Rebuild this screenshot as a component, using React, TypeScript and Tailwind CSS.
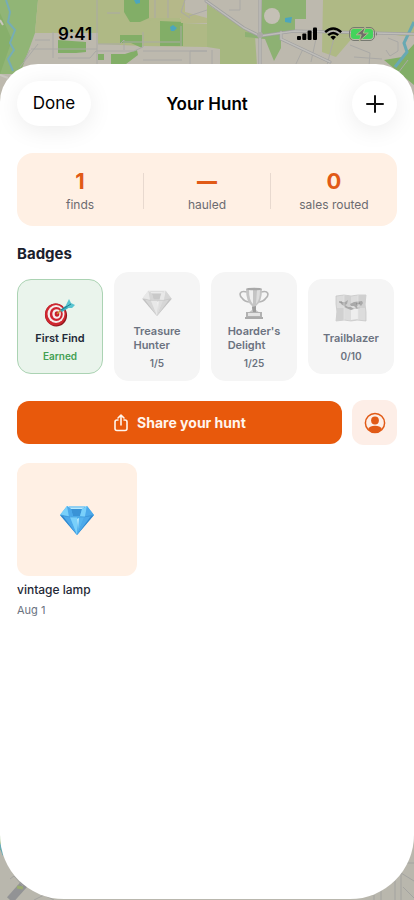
import type { ReactNode } from "react";

function MapTop() {
  return (
    <svg className="absolute inset-x-0 top-0 h-[130px] w-full" viewBox="0 0 414 130" preserveAspectRatio="none" aria-hidden="true">
      <rect width="414" height="130" fill="#bdb9ae" />
      <path d="M0 0H38L35 33 20 74H0Z" fill="#91b576" />
      <path d="M38 0H149V18L207 22V47L143 46 98 44V33H35Z" fill="#afb985" />
      <path d="M0 13L12 40 0 74Z" fill="#87af6b" />
      <path d="M124 0H149V18L140 22H130L124 12ZM160 21H183V46H160ZM58 40L86 42V52L76 53H58ZM120 35H142V48L131 43H120ZM111 54H125L137 50 138 55 126 64H111ZM98 54H104V60H98ZM58 64H80V66H58Z" fill="#82ae67" />
      <path d="M149 18H207V23L160 21V23L149 20Z" fill="#afb985" />
      <path d="M149 0H207V24L183 23 180 18H149Z" fill="#bdb9ae" />
      <path d="M149 0V18H181V23H207V18L185 12V0Z" fill="#b5b889" />
      <path d="M207 4L255 36 257 66 220 64V49L207 47Z" fill="#a6b780" />
      <path d="M262 0H306V19H295V30L281 32V48L274 61 265 39 245 37V32L261 34Z" fill="#8db173" />
      <path d="M323 0H414V38L360 29 336 57 322 52Z" fill="#afb985" />
      <path d="M337 37L414 36V74L394 67 383 60 404 54 414 39Z" fill="#bdb9ae" />
      <path d="M384 60L402 57 414 44V85Z" fill="#82ae67" />
      <path d="M6 0L10 12 8 22 15 30 10 43 14 50 8 59 13 71" stroke="#76adb6" strokeWidth="2" fill="none" />
      <path d="M414 22L404 43 407 52 395 67" stroke="#68a9b3" strokeWidth="3" fill="none" />
      <path d="M134 0H140V3L136 4ZM170 27L173 25 177 28 174 31H171ZM285 18L292 17 291 23 285 22Z" fill="#4ca6bd" />
      <circle cx="272" cy="16" r="8" fill="#c4c0b5" />
      <g stroke="#aaa9a6" fill="none">
        <path d="M97 0V66M53 32V58M35 40H50M31 49H97M24 61L30 50M20 67L38 44M58 58H90L96 51H134L143 47V32M98 44H120L124 40V50M125 42H180M181 26V46M107 13H120M143 51H207M143 60H182M190 66V51H207" />
        <path d="M155 0V18M168 0V18M185 0L181 12 190 18M207 10L189 16M229 10L240 10 240 0M212 66V50M303 49L295 66M317 34L311 62M327 65L334 38M350 45L370 53 369 66M388 38L398 42V51L390 56 386 50M354 57L382 59M408 60L395 77" />
      </g>
      <g fill="none" strokeLinecap="round">
        <path d="M206 1L244 28 260 36 295 31 414 34M260 36V66M281 32V39L330 62M260 35V0" stroke="#a0a0a1" strokeWidth="3" />
        <path d="M206 1L244 28 260 36 295 31 414 34M260 36V66M281 32V39L330 62M260 35V0" stroke="#bebdb9" strokeWidth="1.5" />
      </g>
      <circle cx="260" cy="35" r="3" fill="#aaa9a6" />
      <path d="M0 20L3 25M0 75L8 78" stroke="#c9c6bf" strokeWidth="2" />
    </svg>
  );
}

function MapBottom() {
  return (
    <svg className="absolute inset-x-0 bottom-0 h-[110px] w-full" viewBox="0 0 414 110" preserveAspectRatio="none" aria-hidden="true">
      <rect width="414" height="110" fill="#b9b7ad" />
      <path d="M0 0H3V60H0Z" fill="#87af6b" />
      <path d="M0 54L4 65" stroke="#68a9b3" strokeWidth="3" />
      <path d="M10 110L34 83" stroke="#929395" strokeWidth="8" />
      <path d="M17 97L23 98" stroke="#9aac70" strokeWidth="3" />
      <path d="M10 89L14 86 23 96M34 110L44 105 54 110M381 110V96M401 110V73H414M395 84V110M401 83L414 91M403 97L414 108M374 105V110" fill="none" stroke="#a3a3a0" />
    </svg>
  );
}

function StatusIcons() {
  return (
    <svg className="h-4 w-[82px]" viewBox="0 0 82 16" aria-hidden="true">
      <rect x="1" y="10" width="4" height="4" rx="1" />
      <rect x="6.3" y="7.5" width="4" height="6.5" rx="1" />
      <rect x="11.6" y="4.5" width="4" height="9.5" rx="1" />
      <rect x="17" y="1.5" width="4" height="12.5" rx="1" />
      <g fill="none" stroke="#000" strokeWidth="2.4">
        <path d="M29.2 6.2Q37.2 -1.2 45.2 6.2M32.2 9.2Q37.2 4.8 42.2 9.2" />
      </g>
      <path d="M34.4 11Q37.2 8.6 40 11L37.2 14Z" />
      <rect x="53.5" y="1.5" width="25" height="13" rx="4.5" fill="none" stroke="#777971" />
      <rect x="55" y="3" width="22" height="10" rx="3" fill="#43d35c" />
      <path d="M80 6Q82 8 80 10Z" fill="#777971" />
      <path d="M69.5 .8L60.3 8.8H65.2L63.2 15.2L72.3 7.1H67.4Z" fill="#706e69" stroke="#b2ba91" />
    </svg>
  );
}

function Gem({ gray = false, className }: { gray?: boolean; className: string }) {
  const c = gray
    ? ["#dedede", "#f0f0f0", "#c9c9c9", "#d6d6d6", "#e8e8e8", "#c2c2c2"]
    : ["#55b4ef", "#b8eafe", "#3a93d6", "#4ca9ea", "#79d0fa", "#2f86cd"];
  return (
    <svg className={className} viewBox="0 0 34 30" aria-hidden="true">
      <path d="M7 1H27L34 10 17 30 0 10Z" fill={c[0]} />
      <path d="M7 1L0 10 11 12Z" fill={c[4]} />
      <path d="M7 1H27L22 4H11Z" fill={c[1]} />
      <path d="M11 4H22L20 11H13Z" fill={c[2]} />
      <path d="M7 1L11 4 13 11 9 12Z" fill={c[3]} />
      <path d="M22 4L27 1 25 12 20 11Z" fill={c[4]} />
      <path d="M27 1L34 10 25 12Z" fill={c[3]} />
      <path d="M0 10L9 12 17 30Z" fill={c[5]} />
      <path d="M3 11L10 12 17 30Z" fill={c[3]} />
      <path d="M10 12H17V30Z" fill={c[4]} />
      <path d="M17 12H25L17 30Z" fill={c[0]} />
      <path d="M25 12L34 10 17 30Z" fill={c[5]} />
      <path d="M24 12L31 11 17 30Z" fill={c[3]} />
      <path d="M17 14L19 13 18 24Z" fill={c[1]} />
      <path d="M1 10L10 12H24L33 10M9 2H25" fill="none" stroke={gray ? c[5] : c[2]} strokeWidth=".6" />
    </svg>
  );
}

function Target() {
  return (
    <svg className="h-7 w-8" viewBox="0 0 32 28" aria-hidden="true">
      <ellipse cx="12" cy="16" rx="11" ry="11.5" transform="rotate(-20 12 16)" fill="#8d171d" />
      <ellipse cx="11.5" cy="15.5" rx="10.5" ry="11" fill="#cf2730" />
      <ellipse cx="12" cy="15" rx="8.5" ry="9" fill="#f5eeee" />
      <ellipse cx="12.3" cy="15" rx="6.5" ry="7" fill="#cd2430" />
      <ellipse cx="12.6" cy="15" rx="4.3" ry="4.8" fill="#f6efef" />
      <ellipse cx="13" cy="15" rx="2.3" ry="2.7" fill="#c91e2b" />
      <path d="M13 15L17 11" stroke="#c99335" strokeWidth="1.5" />
      <path d="M16 11L24 5 26 8 18 13Z" fill="#3baebd" />
      <path d="M22 6L25 0 27 4 31 6 28 9 24 9Z" fill="#58c4d0" />
      <path d="M17 11L27 5" stroke="#1e7c91" strokeWidth="1" />
    </svg>
  );
}

function Trophy() {
  return (
    <svg className="h-8 w-[30px]" viewBox="0 0 30 32" aria-hidden="true">
      <path d="M8 5C0 3 0 8 3 11 5 14 8 15 11 15M22 5C30 3 30 8 27 11 25 14 22 15 19 15" fill="none" stroke="#b4b4b4" strokeWidth="1.6" />
      <path d="M7 2H23Q23 15 17 19V23L21 26H9L13 23V19Q7 15 7 2Z" fill="#c4c4c4" />
      <path d="M10 3H14V17Q10 13 10 3Z" fill="#efefef" />
      <path d="M18 3H21Q21 13 17 17Z" fill="#dddddd" />
      <ellipse cx="15" cy="2" rx="8" ry="1.3" fill="#a8a8a8" />
      <path d="M13 20L17 19V25H14Z" fill="#9d9d9d" />
      <path d="M7 25H23V30H7Z" fill="#b2b2b2" />
      <path d="M9 26H21V29H9Z" fill="#e4e4e4" />
      <path d="M6 30H24V32H6Z" fill="#ababab" />
    </svg>
  );
}

function WorldMap() {
  return (
    <svg className="h-7 w-8" viewBox="0 0 32 28" aria-hidden="true">
      <path d="M1 2L9 1 16 2 23 1 31 1 30 10 31 18 31 27 22 26 16 27 9 26 1 27 2 18 1 10Z" fill="#dcdcdc" stroke="#c3c3c3" strokeWidth=".7" />
      <path d="M9 1L16 2V14H9ZM23 1H31L30 14H23ZM2 14H9V26L1 27ZM16 14H23V26L16 27Z" fill="#d0d0d0" />
      <path d="M16 15H23V25L16 26Z" fill="#eee" />
      <path d="M5 8L10 8 13 6 12 10 10 11 13 13 16 13 19 15 16 16 11 14 9 12 6 10ZM15 10L19 8 27 7 28 9 26 12 24 10 22 13 25 14 22 15 19 12 16 12Z" fill="#a9a9a9" />
      <path d="M4 8H7M21 10L25 9" stroke="#8b8b8b" />
      <path d="M9 1V26M23 1V26" stroke="#e8e8e8" strokeWidth=".6" />
    </svg>
  );
}

function Stat({ value, label }: { value: ReactNode; label: string }) {
  return (
    <div className="flex flex-1 flex-col items-center">
      <dd className="flex h-7 items-center text-[22px] leading-7 font-bold text-[#e15a16]">{value}</dd>
      <dt className="order-1 text-xs leading-5 text-[#6b6b70]">{label}</dt>
    </div>
  );
}

function Badge({ icon, lines, status, earned = false }: { icon: ReactNode; lines: string[]; status: string; earned?: boolean }) {
  return (
    <li
      className={
        earned
          ? "flex w-[86px] shrink-0 flex-col items-center rounded-[14px] border border-[#abd3b3] bg-[#eaf4ec] pt-[15px] pb-[10px]"
          : "flex w-[86px] shrink-0 flex-col items-center rounded-[14px] border border-[#f5f5f5] bg-[#f5f5f5] pt-[11px] pb-[10px]"
      }
    >
      <div className={earned ? "flex h-9 items-center" : "flex h-10 items-start pt-[3px]"}>{icon}</div>
      <h3 className={earned ? "text-[11px] leading-[14px] font-semibold text-[#1f2937]" : "text-[11px] leading-[14px] font-semibold text-[#6b7280]"}>
        {lines.map((line) => (
          <span key={line} className="block whitespace-nowrap">{line}</span>
        ))}
      </h3>
      <p className={earned ? "mt-1 text-[10px] leading-[14px] font-semibold text-[#43a052]" : "mt-1 text-[10px] leading-[14px] font-semibold text-[#6b7280]"}>{status}</p>
    </li>
  );
}

export default function App() {
  return (
    <div className="relative isolate flex min-h-screen flex-col overflow-hidden bg-[#b9b7ad] font-['Inter','Liberation_Sans',sans-serif]">
      <div className="absolute inset-0 -z-10">
        <MapTop />
        <MapBottom />
      </div>
      <div className="flex h-16 items-center justify-between pt-1 pr-9 pl-[58px]">
        <time className="text-[17px] leading-6 font-semibold">9:41</time>
        <StatusIcons />
      </div>
      <main className="mb-px flex-1 rounded-t-[38px] rounded-b-[64px] bg-white px-[17px] pt-[17px] pb-16">
        <header className="grid grid-cols-[1fr_auto_1fr] items-center">
          <button className="h-[45px] w-[74px] rounded-full bg-white text-[17px] shadow-[0_4px_24px_rgba(0,0,0,0.08)]">Done</button>
          <h1 className="text-[17px] leading-6 font-semibold">Your Hunt</h1>
          <button aria-label="Add find" className="flex size-[45px] items-center justify-center justify-self-end rounded-full bg-white shadow-[0_4px_24px_rgba(0,0,0,0.08)]">
            <svg className="size-[18px]" viewBox="0 0 18 18" fill="none" stroke="#111" strokeWidth="2" strokeLinecap="round" aria-hidden="true">
              <path d="M9 1V17M1 9H17" />
            </svg>
          </button>
        </header>

        <dl className="mt-[27px] flex items-center rounded-2xl bg-[#fff0e4] pt-[14px] pb-[11px]">
          <Stat value="1" label="finds" />
          <div className="h-9 w-px bg-[#e8d9cf]" />
          <Stat value={<span className="text-xl font-black">—</span>} label="hauled" />
          <div className="h-9 w-px bg-[#e8d9cf]" />
          <Stat value="0" label="sales routed" />
        </dl>

        <section className="mt-[18px]">
          <h2 className="text-[15px] leading-5 font-bold text-[#1a202c]">Badges</h2>
          <ul className="mt-2 flex items-center gap-[11px] overflow-x-auto">
            <Badge earned icon={<Target />} lines={["First Find"]} status="Earned" />
            <Badge icon={<Gem gray className="mt-[3px] h-[26px] w-[30px]" />} lines={["Treasure", "Hunter"]} status="1/5" />
            <Badge icon={<Trophy />} lines={["Hoarder's", "Delight"]} status="1/25" />
            <Badge icon={<WorldMap />} lines={["Trailblazer"]} status="0/10" />
          </ul>
        </section>

        <div className="mt-[19px] flex items-center gap-[10px]">
          <button className="flex h-[43px] flex-1 items-center justify-center gap-2 rounded-xl bg-[#e8590c] text-sm font-bold text-[#fff5ed]">
            <svg className="h-[18px] w-4" viewBox="0 0 16 18" fill="none" stroke="currentColor" strokeWidth="1.6" strokeLinecap="round" strokeLinejoin="round" aria-hidden="true">
              <path d="M5 6H4Q2 6 2 8V14.5Q2 16.5 4 16.5H12Q14 16.5 14 14.5V8Q14 6 12 6H11M8 11V1.5M5 4L8 1.2 11 4" />
            </svg>
            Share your hunt
          </button>
          <button aria-label="Profile" className="flex size-[45px] items-center justify-center rounded-xl bg-[#fdeee7]">
            <svg className="size-[22px]" viewBox="0 0 22 22" aria-hidden="true">
              <circle cx="11" cy="11" r="9.6" fill="none" stroke="#e15a16" strokeWidth="1.5" />
              <circle cx="11" cy="8.5" r="3.9" fill="#e15a16" />
              <path d="M4 17Q6 13.8 11 13.8T18 17Q15 20.5 11 20.5T4 17Z" fill="#e15a16" />
            </svg>
          </button>
        </div>

        <section aria-label="Finds" className="mt-[18px] grid grid-cols-3 gap-[10px]">
          <article>
            <div className="flex h-[113px] items-center justify-center rounded-xl bg-[#fff0e4]">
              <Gem className="h-[30px] w-[34px]" />
            </div>
            <h3 className="mt-[5px] text-xs leading-[18px] font-medium text-[#1f2937]">vintage lamp</h3>
            <p className="mt-[3px] text-[11px] leading-4 text-[#6b7280]">Aug 1</p>
          </article>
        </section>
      </main>
    </div>
  );
}
